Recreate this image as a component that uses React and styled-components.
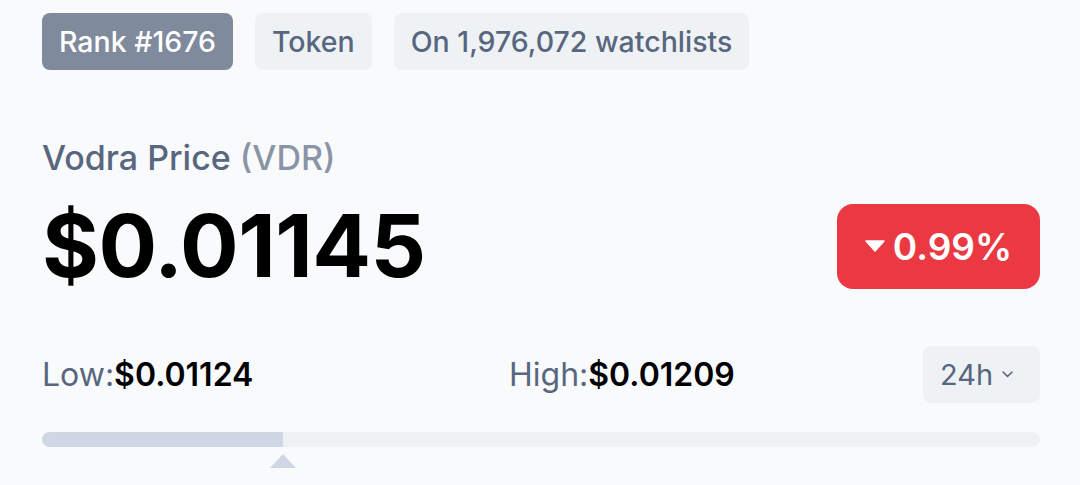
import React from "react";
import styled, { createGlobalStyle } from "styled-components";

const Global = createGlobalStyle`
  html, body { margin: 0; padding: 0; background: #f9fafc; }
  body { font-family: Inter, "Noto Sans", sans-serif; }
`;

const Page = styled.div`
  width: 1080px;
  height: 485px;
  box-sizing: border-box;
  padding: 13px 40px 0 42px;
  background: #f9fafc;
  display: flex;
  flex-direction: column;
`;

const BadgeRow = styled.div`
  display: flex;
  gap: 22px;
`;

const Badge = styled.div`
  height: 57px;
  box-sizing: border-box;
  padding: 0 17px;
  display: flex;
  align-items: center;
  border-radius: 8px;
  font-size: 28.5px;
  font-weight: 500;
  background: ${(p) => (p.$dark ? "#808a9d" : "#eff2f5")};
  color: ${(p) => (p.$dark ? "#ffffff" : "#58667e")};
`;

const NameLine = styled.div`
  margin-top: 68px;
  font-size: 34px;
  font-weight: 500;
  color: #58667e;
  line-height: 40px;
`;

const Symbol = styled.span`
  color: #8a94a6;
`;

const PriceRow = styled.div`
  margin-top: 18px;
  display: flex;
  justify-content: space-between;
  align-items: center;
`;

const Price = styled.div`
  font-size: 87px;
  font-weight: 700;
  color: #000;
  letter-spacing: -0.5px;
  line-height: 100px;
`;

const Change = styled.div`
  width: 203px;
  height: 85px;
  border-radius: 16px;
  background: #ea3943;
  color: #fff;
  display: flex;
  align-items: center;
  justify-content: center;
  gap: 8px;
  font-size: 37px;
  font-weight: 600;
`;

const RangeRow = styled.div`
  margin-top: 50px;
  display: flex;
  align-items: center;
  height: 57px;
`;

const Stat = styled.div`
  width: ${(p) => p.$w}px;
  font-size: 32px;
  color: #58667e;
  font-weight: 400;
`;

const StatValue = styled.span`
  color: #000;
  font-weight: 600;
`;

const Period = styled.div`
  margin-left: auto;
  width: 117px;
  height: 57px;
  box-sizing: border-box;
  padding-left: 17px;
  border-radius: 8px;
  background: #eff2f5;
  color: #58667e;
  display: flex;
  align-items: center;
  gap: 8px;
  font-size: 29px;
  font-weight: 400;
`;

const Track = styled.div`
  margin-top: 29px;
  height: 15px;
  border-radius: 8px;
  background: #eff2f5;
  position: relative;
`;

const Fill = styled.div`
  height: 100%;
  border-radius: 8px 0 0 8px;
  background: #cfd6e4;
`;

const Marker = styled.div`
  position: absolute;
  top: 22px;
  width: 0;
  height: 0;
  border-left: 13px solid transparent;
  border-right: 13px solid transparent;
  border-bottom: 14px solid #cfd6e4;
  transform: translateX(-13px);
`;

export default function App() {
  const pct = (283 - 42) / 998;
  return (
    <>
      <Global />
      <Page>
        <BadgeRow>
          <Badge $dark>Rank #1676</Badge>
          <Badge>Token</Badge>
          <Badge>On 1,976,072 watchlists</Badge>
        </BadgeRow>
        <NameLine>
          Vodra Price <Symbol>(VDR)</Symbol>
        </NameLine>
        <PriceRow>
          <Price>$0.01145</Price>
          <Change>
            <svg width="20" height="12" viewBox="0 0 20 12">
              <path d="M1 1 H19 L10 11 Z" fill="#fff" strokeLinejoin="round" stroke="#fff" strokeWidth="1.5" />
            </svg>
            0.99%
          </Change>
        </PriceRow>
        <RangeRow>
          <Stat $w={467}>
            Low:<StatValue>$0.01124</StatValue>
          </Stat>
          <Stat $w={300}>
            High:<StatValue>$0.01209</StatValue>
          </Stat>
          <Period>
            24h
            <svg width="13" height="9" viewBox="0 0 13 9">
              <path d="M2 2 L6.5 6.5 L11 2" fill="none" stroke="#58667e" strokeWidth="1.6" strokeLinecap="round" strokeLinejoin="round" />
            </svg>
          </Period>
        </RangeRow>
        <Track>
          <Fill style={{ width: `${pct * 100}%` }} />
          <Marker style={{ left: `${pct * 100}%` }} />
        </Track>
      </Page>
    </>
  );
}
